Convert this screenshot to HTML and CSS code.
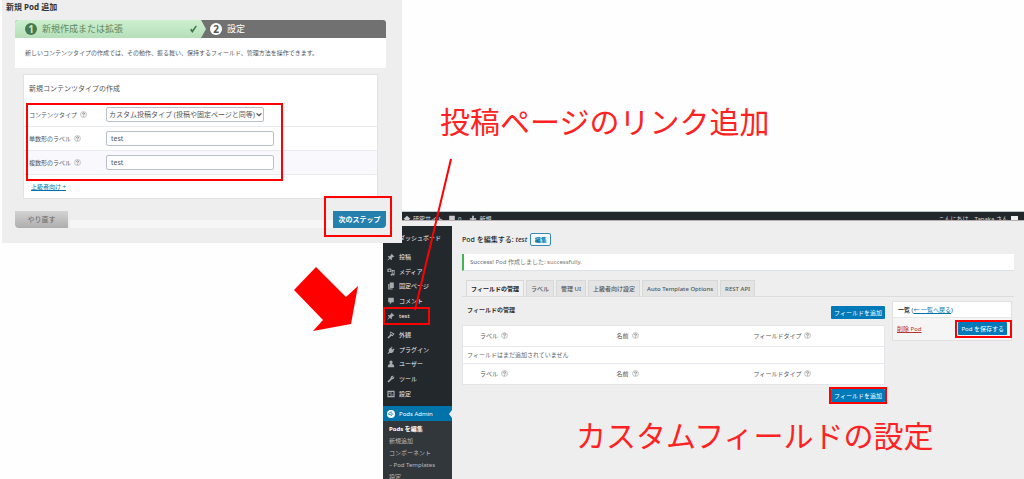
FILE: index.html
```html
<!DOCTYPE html>
<html lang="ja">
<head>
<meta charset="utf-8">
<title>Pods の設定手順</title>
<link rel="stylesheet" href="styles.css">
</head>
<body>
<svg class="defs" aria-hidden="true">
  <symbol id="help" viewBox="0 0 14 14"><circle cx="7" cy="7" r="6" fill="#f0f0f0" stroke="#bbb" stroke-width="1.5"/><path d="M5 5.5Q5 3.5 7 3.5T9 5.500Q9 6.500 7 7.500V8.500M7 10v1.200" fill="none" stroke="#777" stroke-width="1.500"/></symbol>
  <symbol id="pin" viewBox="0 0 20 20"><path d="M10.400 3l1-1 7 7-1 1-2-.5-3.500 3.500.5 3.500-1.500 1.500-3.600-3.600L2 19l-1-1 4.600-5.300L2 9.100 3.500 7.600l3.500.5L10.600 4.600z"/></symbol>
  <symbol id="media" viewBox="0 0 20 20"><path d="M1 2h3l1-1h3l1 1h2v8H1zM6 3.500a2.500 2.500 0 100 5 2.500 2.500 0 000-5zM12 5h7v11a2.500 2.500 0 11-2-2.400V8h-3v9a2.500 2.500 0 11-2-2.400z" fill-rule="evenodd"/></symbol>
  <symbol id="pages" viewBox="0 0 20 20"><path d="M7 1h10v14H7zM3 5h3v11h8v3H3z"/></symbol>
  <symbol id="comment" viewBox="0 0 20 20"><path d="M3 2h14v11h-5l-5 6v-6H3z"/></symbol>
  <symbol id="brush" viewBox="0 0 20 20"><path d="M8 1l11 6-5 6-3-1-2 2-5 5-3-3 5-5 2-2-1-3zM9 4L8 6l6 4 1-2z" fill-rule="evenodd"/></symbol>
  <symbol id="plug" viewBox="0 0 20 20"><path d="M12 1l2 2-3 3 3 3 3-3 2 2-3 3 1 2-3 3c-2 2-5 2-7 1l-4 3-2-2 4-3C4 11 4 9 6 7l3-3 1 1z"/></symbol>
  <symbol id="user" viewBox="0 0 20 20"><path d="M10 1a4 4 0 014 4c0 2-1 4-2 5 4 0 6 3 6 8H2c0-5 2-8 6-8-1-1-2-3-2-5a4 4 0 014-4z"/></symbol>
  <symbol id="wrench" viewBox="0 0 20 20"><path d="M17 2l-4 4 1 1 4-3c1 4-1 7-6 7l-8 8-3-3 8-8c0-5 3-7 8-6z"/></symbol>
  <symbol id="sliders" viewBox="0 0 20 20"><path d="M1 2h18v16H1zM4 5v10h5V5zM11 5v10h5V5zM5 7h3v2H5zM12 11h3v2h-3z" fill-rule="evenodd"/></symbol>
  <symbol id="pods" viewBox="0 0 20 20"><circle cx="10" cy="10" r="10" fill="#fff"/><path d="M3 10q5-6 10-5M4 11q5-1 8 4M9 10h7" fill="none" stroke="#0073aa" stroke-width="2"/></symbol>
  <symbol id="home" viewBox="0 0 20 20"><path d="M10 2l9 8h-3v8H4v-8H1z"/></symbol>
  <symbol id="plus" viewBox="0 0 20 20"><path d="M8 2h4v6h6v4h-6v6H8v-6H2V8h6z"/></symbol>
</svg>

<main class="canvas">
  <section class="window edit">
    <header class="adminbar">
      <svg class="icon"><use href="#home"/></svg><span class="site">研究サイト</span>
      <svg class="icon"><use href="#comment"/></svg><span class="count">0</span>
      <svg class="icon"><use href="#plus"/></svg><span>新規</span>
      <span class="greet">こんにちは、Tanaka さん</span><span class="avatar"></span>
    </header>
    <div class="work">
      <nav class="sidebar">
        <a class="item dash" href="#"><span class="icon"></span>ダッシュボード</a>
        <div class="group">
          <a class="item" href="#"><svg class="icon"><use href="#pin"/></svg>投稿</a>
          <a class="item" href="#"><svg class="icon"><use href="#media"/></svg>メディア</a>
          <a class="item" href="#"><svg class="icon"><use href="#pages"/></svg>固定ページ</a>
          <a class="item" href="#"><svg class="icon"><use href="#comment"/></svg>コメント</a>
          <a class="item marked mark-test" href="#"><svg class="icon"><use href="#pin"/></svg>test</a>
        </div>
        <div class="group">
          <a class="item" href="#"><svg class="icon"><use href="#brush"/></svg>外観</a>
          <a class="item" href="#"><svg class="icon"><use href="#plug"/></svg>プラグイン</a>
          <a class="item" href="#"><svg class="icon"><use href="#user"/></svg>ユーザー</a>
          <a class="item" href="#"><svg class="icon"><use href="#wrench"/></svg>ツール</a>
          <a class="item" href="#"><svg class="icon"><use href="#sliders"/></svg>設定</a>
        </div>
        <a class="item current" href="#"><svg class="icon"><use href="#pods"/></svg>Pods Admin</a>
        <div class="submenu">
          <a class="on" href="#">Pods を編集</a>
          <a href="#">新規追加</a>
          <a href="#">コンポーネント</a>
          <a href="#">– Pod Templates</a>
          <a href="#">設定</a>
        </div>
      </nav>
      <div class="content">
        <div class="heading"><h1>Pod を編集する: <em>test</em></h1><button class="outline">編集</button></div>
        <p class="notice"><b>Success!</b> Pod 作成しました: successfully.</p>
        <div class="tabs">
          <button class="tab active">フィールドの管理</button>
          <button class="tab">ラベル</button>
          <button class="tab">管理 UI</button>
          <button class="tab">上級者向け設定</button>
          <button class="tab">Auto Template Options</button>
          <button class="tab">REST API</button>
        </div>
        <div class="columns">
          <div class="fields">
            <div class="fields-head"><h2>フィールドの管理</h2><button class="primary">フィールドを追加</button></div>
            <table class="list">
              <thead><tr><th>ラベル<svg class="help"><use href="#help"/></svg></th><th>名前<svg class="help"><use href="#help"/></svg></th><th>フィールドタイプ<svg class="help"><use href="#help"/></svg></th></tr></thead>
              <tbody><tr><td colspan="3">フィールドはまだ追加されていません</td></tr></tbody>
              <tfoot><tr><th>ラベル<svg class="help"><use href="#help"/></svg></th><th>名前<svg class="help"><use href="#help"/></svg></th><th>フィールドタイプ<svg class="help"><use href="#help"/></svg></th></tr></tfoot>
            </table>
            <div class="fields-foot"><span class="marked"><button class="primary">フィールドを追加</button></span></div>
          </div>
          <aside class="side">
            <h2>一覧 <small>(<a href="#">← 一覧へ戻る</a>)</small></h2>
            <div class="side-body"><a class="delete" href="#">削除 Pod</a><span class="marked mark-save"><button class="primary">Pod を保存する</button></span></div>
          </aside>
        </div>
      </div>
    </div>
  </section>

  <section class="window add">
    <h1>新規 Pod 追加</h1>
    <div class="wizard">
      <ol class="steps">
        <li class="step done"><span class="num">1</span>新規作成または拡張<svg class="tick" viewBox="0 0 16 16"><path d="M2 9l4 5L14 2l-2-1-6 8-2-3z"/></svg></li>
        <li class="step next"><span class="num">2</span>設定</li>
      </ol>
      <p class="intro">新しいコンテンツタイプの作成では、その動作、振る舞い、保持するフィールド、管理方法を操作できます。</p>
      <form class="card">
        <h2>新規コンテンツタイプの作成</h2>
        <div class="rows marked">
          <div class="row"><label for="kind">コンテンツタイプ<svg class="help"><use href="#help"/></svg></label><span class="select"><select id="kind"><option>カスタム投稿タイプ (投稿や固定ページと同等)</option></select><svg class="chevron" viewBox="0 0 10 6"><path d="M1 1l4 4 4-4"/></svg></span></div>
          <div class="row"><label for="single">単数形のラベル<svg class="help"><use href="#help"/></svg></label><input id="single" value="test"></div>
          <div class="row alt"><label for="plural">複数形のラベル<svg class="help"><use href="#help"/></svg></label><input id="plural" value="test"></div>
        </div>
        <a class="more" href="#">上級者向け +</a>
      </form>
      <div class="actions"><button class="reset">やり直す</button><span class="track"></span><span class="marked mark-next"><button class="go">次のステップ</button></span></div>
    </div>
  </section>

  <p class="note note-link">投稿ページのリンク追加</p>
  <p class="note note-field">カスタムフィールドの設定</p>
  <svg class="pointer" viewBox="0 0 40 154"><path d="M38 1L2 152"/></svg>
  <svg class="arrow" viewBox="0 0 66 66"><path d="M23 1L53 31L65 20L58 58L20 65L30 54L1 24Z"/></svg>
</main>
</body>
</html>
```
FILE: styles.css
```css
* { box-sizing: border-box; }
body {
  margin: 0;
  background: #fefefe;
  color: #555;
  font: 6px/8px "Noto Sans", "Noto Sans CJK JP", sans-serif;
}
h1, h2, p, ol { margin: 0; padding: 0; }
button, input, select { font: inherit; color: inherit; margin: 0; }
button { padding: 0; white-space: nowrap; }
a { color: #0073aa; }
.defs { position: absolute; width: 0; height: 0; }
.canvas { position: relative; min-height: 100vh; overflow: hidden; }
.window { position: absolute; background: #eee; }

.icon { width: 8px; height: 8px; flex: none; fill: #a6abb0; }
.help { width: 7px; height: 7px; margin-left: 3px; vertical-align: -1px; }

/* red highlight frames */
.marked { position: relative; }
.marked::after {
  content: "";
  position: absolute;
  inset: -2px;
  border: 2px solid #f00;
  pointer-events: none;
}

/* add-new window */
.add { left: 2px; top: 0; width: 400px; padding: 2px 16px 15px 13px; }
.add h1 { margin-left: -9px; font-size: 8px; line-height: 10px; color: #333; }
.wizard { margin-top: 8px; }
.steps { display: flex; height: 18px; list-style: none; background: #717171; border-radius: 3px 3px 0 0; overflow: hidden; }
.step { display: flex; align-items: center; gap: 5px; font-size: 9px; }
.num {
  display: grid;
  place-items: center;
  width: 12px;
  height: 12px;
  border-radius: 50%;
  font: bold 10px/12px "Noto Sans", sans-serif;
}
.done {
  width: 191px;
  padding: 0 8px 0 10px;
  color: #5f8866;
  background: linear-gradient(#cdf0cf, #b5dfb8);
  clip-path: polygon(0 0, 186px 0, 100% 50%, 186px 100%, 0 100%);
}
.done .num { color: #c8ebca; background: #477a50; }
.tick { width: 9px; height: 9px; margin-left: auto; fill: #3c7646; }
.next { padding-left: 4px; color: #fff; }
.next .num { color: #555; background: #fff; }
.intro { padding: 11px 10px; background: #fff; white-space: nowrap; }
.card { margin: 6px 8px 0; background: #fff; border: 1px solid #e3e3e3; }
.card h2 { padding: 9px 5px; font: 7px/10px "Liberation Serif", "Noto Sans CJK JP", serif; color: #555; }
.rows::after { inset: 0 94px -6px 2px; }
.row { display: flex; align-items: center; height: 24px; padding-left: 5px; border-bottom: 1px solid #e8ebee; }
.row.alt { background: #f8f8fd; }
.row label { width: 77px; }
.row input, .row select {
  height: 15px;
  padding: 0 4px;
  border: 1px solid #b8c2c8;
  border-radius: 2px;
  background: #fff;
  font-size: 7px;
}
.row input { width: 168px; }
.select { position: relative; }
.row select { display: block; width: 158px; padding: 0 2px; appearance: none; }
.chevron { position: absolute; right: 2px; top: 5px; width: 6px; height: 5px; fill: none; stroke: #444; stroke-width: 2; }
.more { display: block; padding: 8px 7px 7px; }
.actions { display: flex; align-items: flex-end; margin-top: 12px; }
.actions button { display: block; width: 53px; height: 17px; border: 0; font-size: 7px; }
.reset { background: linear-gradient(#d3d3d3, #adadad); border-radius: 0 0 0 4px; color: #666; }
.track { flex: 1; height: 8px; margin-left: 2px; background: #f6f6f6; }
.actions .go { background: #2580ae; color: #fff; font-weight: bold; border-radius: 0 0 4px 0; }
.mark-next::after { inset: -15px -6px -9px -9px; }

/* edit window */
.edit { display: flex; flex-direction: column; left: 383px; right: 0; top: 211px; bottom: 0; }
.adminbar {
  flex: none;
  display: flex;
  align-items: center;
  height: 10px;
  padding: 6px 6px 0 20px;
  overflow: hidden;
  background: #23282d;
  border-top: 1px solid #b9c8d0;
  border-bottom: 1px solid #b5adb0;
  color: #ddd;
  white-space: nowrap;
}
.adminbar .icon { fill: #ccc; margin-right: 2px; }
.site { margin-right: 5px; }
.count { margin-right: 8px; }
.greet { margin-left: auto; }
.avatar { width: 7px; height: 7px; margin-left: 3px; background: #eee; }
.work { flex: 1; min-height: 0; display: flex; }
.sidebar { flex: none; display: flex; flex-direction: column; width: 69px; margin-top: 5px; padding-top: 4px; background: #23282d; }
.item { display: flex; align-items: center; gap: 4px; height: 15px; flex: none; padding-left: 4px; color: #eee; text-decoration: none; }
.group { flex: none; display: grid; grid-auto-rows: 1fr; height: 73px; margin-top: 5px; }
.group .item { height: auto; }
.mark-test::after { inset: -1px 22px -2px 0; }
.current { position: relative; margin-top: 5px; background: #0073aa; color: #fff; }
.current::after {
  content: "";
  position: absolute;
  right: 0;
  top: 4px;
  border: 4px solid transparent;
  border-left: 0;
  border-right: 3px solid #eee;
}
.submenu { flex: 1; min-height: 0; display: grid; grid-auto-rows: 12px; align-items: center; align-content: start; padding: 2px 0 0 6px; overflow: hidden; background: #32373c; }
.submenu a { color: #b4b9be; text-decoration: none; }
.submenu .on { color: #fff; font-weight: bold; }

.content { flex: 1; min-width: 0; padding: 12px 10px 0; }
.heading { display: flex; align-items: center; gap: 3px; }
.heading h1 { font-size: 7px; line-height: 10px; font-weight: 500; color: #23282d; }
.outline { width: 21px; height: 13px; border: 1px solid #3789b5; border-radius: 2px; background: #fafafa; color: #0071a1; font-weight: bold; }
.notice { margin-top: 8px; padding: 4px 6px; background: #fff; border-left: 2px solid #46b450; border-bottom: 1px solid #dce2e6; color: #777; }
.notice b { font-weight: 500; }
.tabs { display: flex; gap: 2px; margin-top: 9px; padding-left: 4px; border-bottom: 1px solid #ddd; }
.tab { height: 16px; padding: 0 4px; border: 1px solid #d8d8d8; border-bottom: 0; background: #e4e4e4; color: #555; font-weight: 500; }
.tab.active { background: #f1f1f1; color: #222; font-weight: bold; margin-bottom: -1px; }
.columns { display: flex; align-items: flex-start; gap: 7px; padding-right: 2px; }
.fields { flex: 1; }
.fields-head { display: flex; justify-content: space-between; padding: 9px 0 6px 5px; }
h2 { font-size: 6px; line-height: 8px; color: #333; }
.primary { display: block; height: 13px; padding: 0 3px; border: 0; border-radius: 1px; background: #0079b8; color: #fff; }
.list { width: 100%; border-collapse: collapse; background: #fff; border: 1px solid #e3e5e8; table-layout: fixed; }
.list th { height: 21px; padding: 0 0 0 17px; text-align: left; font-weight: normal; }
.list th:nth-child(-n+2) { width: 137px; }
.list td { height: 17px; padding: 0 4px; border: solid #e6e8f0; border-width: 1px 0; color: #666; }
.fields-foot { display: flex; justify-content: flex-end; margin-top: 4px; }
.side { width: 120px; margin-top: 4px; background: #f5f5f5; border: 1px solid #e0e0e0; }
.side h2 { padding: 4px 5px 3px; background: #fff; border-bottom: 1px solid #e6e6e6; }
.side small { font-size: 6px; font-weight: normal; }
.side-body { display: flex; align-items: center; justify-content: space-between; padding: 4px 4px 5px; }
.mark-save::after { inset: -2px -5px -3px -3px; }
.delete { color: #b33; }

/* annotations */
.note { position: absolute; font: 30px/36px "Noto Sans CJK JP", sans-serif; color: #ff2222; white-space: nowrap; }
.note-link { left: 440px; top: 102px; }
.note-field { left: 576px; top: 416px; }
.pointer { position: absolute; left: 413px; top: 158px; width: 40px; height: 154px; fill: none; stroke: #f00; stroke-width: 2; }
.arrow { position: absolute; left: 293px; top: 266px; width: 66px; height: 66px; fill: #f00; }
```
